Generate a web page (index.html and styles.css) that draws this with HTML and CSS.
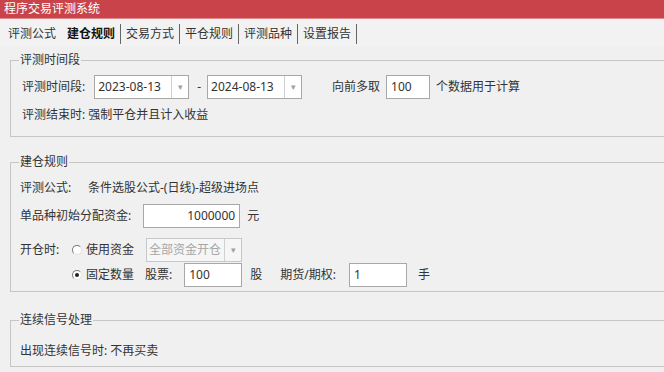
FILE: index.html
```html
<!DOCTYPE html>
<html lang="zh-CN">

<head>
  <meta charset="UTF-8">
  <meta name="viewport" content="width=device-width, initial-scale=1.0">
  <title>程序交易评测系统</title>
  <link rel="stylesheet" href="styles.css">
</head>

<body>
  <div class="titlebar">程序交易评测系统</div>

  <div class="tabs">
    <span class="tab first">评测公式</span>
    <span class="tab active">建仓规则</span>
    <span class="tab">交易方式</span>
    <span class="tab">平仓规则</span>
    <span class="tab">评测品种</span>
    <span class="tab">设置报告</span>
  </div>

  <div class="content">
    <fieldset class="group group-time">
      <legend>评测时间段</legend>
      <div class="row row-tall">
        <span class="label">评测时间段:</span>
        <div class="combo date">
          <span class="combo-text">2023-08-13</span>
          <span class="combo-btn">&#9662;</span>
        </div>
        <span class="dash">-</span>
        <div class="combo date date-end">
          <span class="combo-text">2024-08-13</span>
          <span class="combo-btn">&#9662;</span>
        </div>
        <span class="forward">向前多取</span>
        <div class="input input-count">100</div>
        <span class="unit">个数据用于计算</span>
      </div>
      <div class="row row-gap8">
        <span>评测结束时: 强制平仓并且计入收益</span>
      </div>
    </fieldset>

    <fieldset class="group group-build">
      <legend>建仓规则</legend>
      <div class="row">
        <span class="label label-formula">评测公式:</span>
        <span>条件选股公式-(日线)-超级进场点</span>
      </div>
      <div class="row row-tall row-gap8">
        <span class="label label-fund">单品种初始分配资金:</span>
        <div class="input input-fund">1000000</div>
        <span class="unit unit-yuan">元</span>
      </div>
      <div class="row row-tall row-gap10">
        <span class="label label-open">开仓时:</span>
        <span class="radio"></span>
        <span class="radio-text">使用资金</span>
        <div class="combo disabled">
          <span class="combo-text">全部资金开仓</span>
          <span class="combo-btn">&#9662;</span>
        </div>
      </div>
      <div class="row row-tall row-gap1">
        <span class="label label-open"></span>
        <span class="radio checked"></span>
        <span class="radio-text">固定数量</span>
        <span class="stock">股票:</span>
        <div class="input input-stock">100</div>
        <span class="unit unit-share">股</span>
        <span class="futures">期货/期权:</span>
        <div class="input input-futures">1</div>
        <span class="unit unit-hand">手</span>
      </div>
    </fieldset>

    <fieldset class="group group-signal">
      <legend>连续信号处理</legend>
      <div class="row">
        <span>出现连续信号时: 不再买卖</span>
      </div>
    </fieldset>
  </div>
</body>

</html>
```

FILE: styles.css
```css
html,
body {
  margin: 0;
  padding: 0;
  width: 664px;
  height: 372px;
  overflow: hidden;
}

body {
  font-family: "Noto Sans", "Noto Sans CJK SC", sans-serif;
  font-size: 12px;
  line-height: 16px;
  color: #333;
  background: #f0f0f0;
}

.titlebar {
  height: 18px;
  line-height: 17px;
  padding-left: 4px;
  background: #c9434b;
  border-bottom: 1px solid #e08a8f;
  color: #fff;
}

.tabs {
  display: flex;
  align-items: center;
  height: 27px;
  padding-left: 3px;
  background: #f2f2f2;
}

.tab {
  height: 20px;
  line-height: 20px;
  padding: 0 5px;
  margin-top: 3px;
  border-right: 1px solid #666;
  color: #333;
}

.tab.first {
  border-right-color: transparent;
}

.tab.active {
  color: #111;
  font-weight: 600;
}

.content {
  padding-left: 10px;
}

.group {
  margin: 0;
  padding: 0 0 0 9px;
  border: 1px solid #c6c6c6;
  border-right-width: 0;
  min-width: 0;
}

.group legend {
  padding: 0 1px;
  margin-left: -1px;
  line-height: 16px;
  color: #333;
}

.group-time {
  margin-top: 6px;
  padding-top: 7px;
  padding-bottom: 13px;
}

.group-time .row {
  padding-left: 2px;
}

.group-build {
  margin-top: 17px;
  padding-top: 10px;
  padding-bottom: 4px;
}

.group-signal {
  margin-top: 20px;
  padding-top: 15px;
  padding-bottom: 7px;
}

.row {
  display: flex;
  align-items: center;
  height: 16px;
  white-space: nowrap;
}

.row-tall {
  height: 24px;
}

.row-gap8 {
  margin-top: 8px;
}

.row-gap10 {
  margin-top: 10px;
}

.row-gap1 {
  margin-top: 1px;
}

.label {
  flex: none;
}

.combo {
  display: flex;
  height: 24px;
  box-sizing: border-box;
  border: 1px solid #a8a8a8;
  background: #fff;
}

.combo-text {
  flex: 1;
  min-width: 0;
  overflow: hidden;
  padding-left: 3px;
  line-height: 22px;
}

.combo-btn {
  flex: none;
  width: 16px;
  border-left: 1px solid #d0d0d0;
  text-align: center;
  line-height: 22px;
  font-size: 9px;
  color: #a0a0a0;
}

.date {
  width: 95px;
  margin-left: 9px;
}

.dash {
  margin-left: 8px;
}

.date-end {
  margin-left: 6px;
}

.forward {
  margin-left: 30px;
}

.input {
  height: 24px;
  box-sizing: border-box;
  border: 1px solid #a8a8a8;
  background: #fff;
  padding: 0 4px;
  line-height: 22px;
}

.input-count {
  width: 44px;
  margin-left: 6px;
}

.unit {
  margin-left: 6px;
}

.label-formula {
  width: 68px;
}

.input-fund {
  width: 97px;
  margin-left: 12px;
  text-align: right;
}

.unit-yuan {
  margin-left: 7px;
}

.label-open {
  width: 52px;
}

.radio {
  position: relative;
  flex: none;
  width: 10px;
  height: 10px;
  box-sizing: border-box;
  border: 1px solid;
  border-color: #7a7a7a #e2e2e2 #e2e2e2 #7a7a7a;
  border-radius: 50%;
  background: #fff;
}

.radio.checked::after {
  content: "";
  position: absolute;
  left: 2px;
  top: 2px;
  width: 4px;
  height: 4px;
  border-radius: 50%;
  background: #222;
}

.radio-text {
  margin-left: 4px;
}

.disabled {
  width: 96px;
  margin-left: 12px;
  border-color: #c8c8c8;
  background: #f6f6f6;
}

.disabled .combo-text {
  padding-left: 2px;
  color: #a6a6a6;
}

.stock {
  margin-left: 11px;
}

.input-stock {
  width: 58px;
  margin-left: 12px;
}

.unit-share {
  margin-left: 8px;
}

.futures {
  margin-left: 18px;
}

.input-futures {
  width: 58px;
  margin-left: 13px;
}

.unit-hand {
  margin-left: 11px;
}
```
